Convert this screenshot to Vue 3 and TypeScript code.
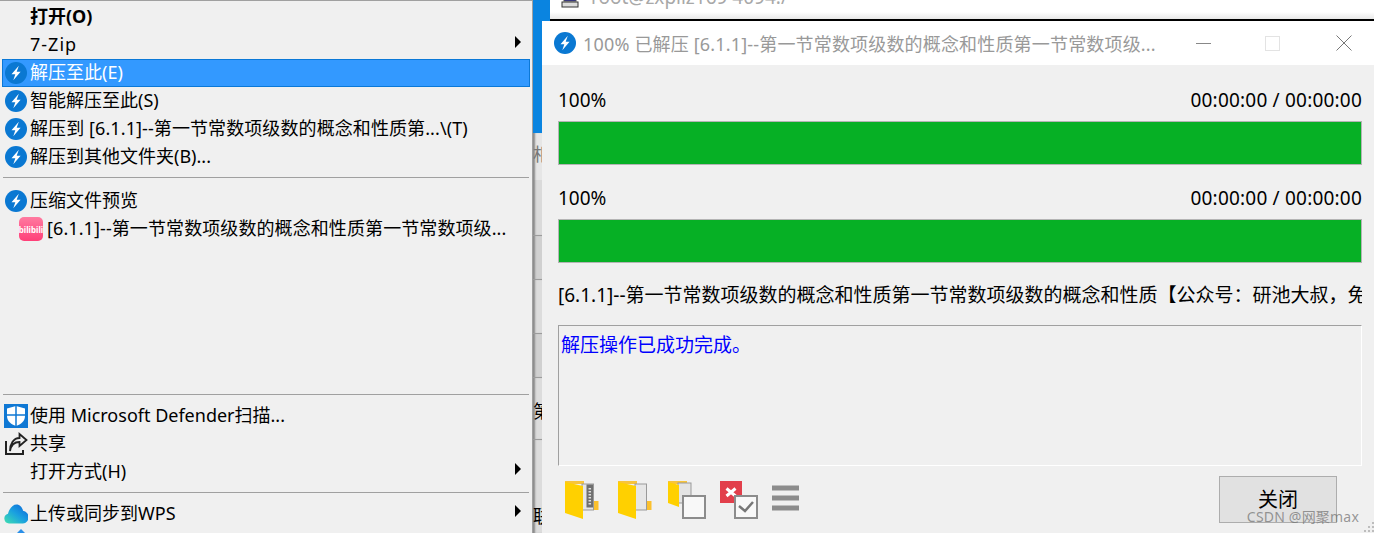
<template>
  <div class="screen">
    <aside class="menu">
      <template v-for="(group, g) in menuGroups" :key="g">
        <div v-if="g > 0" class="sep" :class="group.sepClass"></div>
        <div
          v-for="item in group.items"
          :key="item.label"
          class="row"
          :class="{ active: item.active, bold: item.bold, indent: item.icon === 'bili' }"
        >
          <span class="row-icon">
            <svg v-if="item.icon === 'bolt'" viewBox="0 0 22 22" width="22" height="22">
              <circle cx="11" cy="11" r="11" fill="#0a78d2" />
              <path d="M13.800 3.800 6.500 12.300h3.800L8.300 18.300 15.600 9.700h-3.900z" fill="#fff" />
            </svg>
            <svg v-else-if="item.icon === 'bili'" viewBox="0 0 24 24" width="24" height="24">
              <defs>
                <linearGradient id="biliFill" x1="0" x2="0" y1="0" y2="1">
                  <stop offset="0" stop-color="#ff7aa0" />
                  <stop offset="1" stop-color="#ff3f78" />
                </linearGradient>
              </defs>
              <rect width="24" height="24" rx="5" fill="url(#biliFill)" />
              <text x="12" y="15.500" text-anchor="middle" class="bili-text">bilibili</text>
            </svg>
            <svg v-else-if="item.icon === 'shield'" viewBox="0 0 24 24" width="24" height="24">
              <rect width="24" height="24" fill="#0f78d4" />
              <path d="M3 4.500 12 2l9 2.500V12c0 5-4 8.500-9 10-5-1.500-9-5-9-10z" fill="#fff" />
              <path d="M12 2v20M3 11h18" stroke="#0f78d4" stroke-width="1.500" />
            </svg>
            <svg v-else-if="item.icon === 'share'" viewBox="0 0 24 24" width="24" height="24">
              <path d="M2 9v13h17v-4" fill="none" stroke="#222" stroke-width="2" />
              <path d="M6 19c1-6 4.500-9 9.500-9v4l7-6-7-6v4C9.500 6 6 12 6 19z" fill="none" stroke="#222" stroke-width="1.800" />
            </svg>
            <svg v-else-if="item.icon === 'cloud'" viewBox="0 0 24 20" width="24" height="20">
              <defs>
                <linearGradient id="cloudFill" x1="0" x2="1" y1="1" y2="0">
                  <stop offset="0" stop-color="#3fe0b0" />
                  <stop offset="0.500" stop-color="#1aa0e0" />
                  <stop offset="1" stop-color="#0a5fd8" />
                </linearGradient>
              </defs>
              <path d="M5 19.500a5 5 0 0 1-1-9.800C5.500 4 9 .5 12.500.5c3.500 0 6 3 6.500 6.300a6.400 6.400 0 0 1 0 12.700z" fill="url(#cloudFill)" />
            </svg>
          </span>
          <span class="row-label" :style="item.track ? { letterSpacing: item.track + 'px' } : undefined">{{ item.label }}</span>
          <span v-if="item.sub" class="row-arrow"></span>
        </div>
        <div v-if="group.grow" class="menu-space"></div>
      </template>
      <svg class="peek-icon" viewBox="0 0 8 4" width="8" height="4">
        <path d="M0 4 4 0l4 4z" fill="#2a8fe8" />
      </svg>
    </aside>

    <div class="gutter">
      <div class="gutter-top"></div>
      <div v-for="(cell, i) in gutterCells" :key="i" class="cell" :class="cell.cls">
        <span v-if="cell.text">{{ cell.text }}</span>
      </div>
    </div>

    <div class="right">
      <div class="term">
        <svg viewBox="0 0 18 16" width="18" height="16">
          <rect x="3" y="-4" width="12" height="12" fill="#1a1aa8" stroke="#555" />
          <rect x="1" y="9" width="16" height="5" fill="#ddd" stroke="#333" />
        </svg>
        <span>root@zxpilz169 4094:/</span>
      </div>
      <div class="term-edge"></div>

      <section class="dialog">
        <header class="title-bar">
          <svg viewBox="0 0 22 22" width="22" height="22">
            <circle cx="11" cy="11" r="11" fill="#0a78d2" />
            <path d="M13.800 3.800 6.500 12.300h3.800L8.300 18.300 15.600 9.700h-3.900z" fill="#fff" />
          </svg>
          <span class="title-text">100% 已解压 [6.1.1]--第一节常数项级数的概念和性质第一节常数项级...</span>
          <span class="win-btns">
            <span class="win-min"></span>
            <span class="win-max"></span>
            <svg viewBox="0 0 16 16" width="16" height="16">
              <path d="M.5.5l15 15M15.500.5l-15 15" stroke="#777" fill="none" />
            </svg>
          </span>
        </header>

        <div class="body">
          <div v-for="n in 2" :key="n" class="progress">
            <div class="progress-info">
              <span>100%</span>
              <span class="time">00:00:00 / 00:00:00</span>
            </div>
            <div class="bar"><div class="bar-fill" :style="{ width: percent + '%' }"></div></div>
          </div>

          <div class="file-name">[6.1.1]--第一节常数项级数的概念和性质第一节常数项级数的概念和性质【公众号：研池大叔，免费分享</div>

          <div class="log">解压操作已成功完成。</div>

          <footer class="tools">
            <div class="tool-icons">
              <svg class="gap-5" viewBox="0 0 34 38" width="34" height="38">
                <path d="M0 0h19v3H0z" fill="#f8c43a" />
                <path d="M18 29V21h10v-1h5.500v9z" fill="#fbc02d" />
                <rect x="17" y="3" width="11.500" height="26" fill="#e6e6e6" stroke="#999" />
                <rect x="21.500" y="3.500" width="6.500" height="23" fill="#6f6f6f" />
                <path d="M24.800 7v17" stroke="#ddd" stroke-width="2.500" stroke-dasharray="1.500 1.500" />
                <path d="M0 1 18 5v33L0 32z" fill="#ffd000" />
              </svg>
              <svg class="gap-2" viewBox="0 0 34 38" width="34" height="38">
                <path d="M0 0h19v3H0z" fill="#f8c43a" />
                <path d="M18 29V21h10v-1h5.500v9z" fill="#fbc02d" />
                <rect x="17" y="3" width="11.500" height="26" fill="#e6e6e6" stroke="#999" />
                <path d="M0 1 18 5v33L0 32z" fill="#ffd000" />
              </svg>
              <svg viewBox="0 0 38 38" width="38" height="38">
                <path d="M0 0h19v3H0z" fill="#f8c43a" />
                <rect x="10" y="2" width="13" height="20" fill="#e4e4e4" stroke="#999" />
                <path d="M0 1 11 4v22L0 22z" fill="#ffd000" />
                <rect x="15" y="15" width="22" height="22" fill="#f8f8f8" stroke="#8c8c8c" stroke-width="2" />
              </svg>
              <svg viewBox="0 0 38 38" width="38" height="38">
                <rect width="22" height="22" fill="#e23f4b" />
                <path d="M6.500 7.500l9 7.500M15.500 7.500l-9 7.500" stroke="#fff" stroke-width="3" />
                <rect x="15" y="15" width="22" height="22" fill="#f8f8f8" stroke="#8c8c8c" stroke-width="2" />
                <path d="M19 25l6 5 8-9" fill="none" stroke="#777" stroke-width="2.500" />
              </svg>
              <svg class="burger" viewBox="0 0 27 26" width="27" height="26">
                <path d="M0 3h27M0 13h27M0 23h27" stroke="#8c8c8c" stroke-width="5" />
              </svg>
            </div>
            <button class="close-btn">关闭</button>
          </footer>
        </div>
      </section>
    </div>

    <div class="watermark">CSDN @网聚max</div>
    <svg class="grip" viewBox="0 0 10 11" width="10" height="11">
      <rect v-for="d in gripDots" :key="d[0] + '-' + d[1]" :x="d[0]" :y="d[1]" width="2" height="2" fill="#bdbdbd" />
    </svg>
  </div>
</template>

<script setup lang="ts">
type MenuItem = { label: string; icon?: string; active?: boolean; bold?: boolean; sub?: boolean; track?: number };
type MenuGroup = { items: MenuItem[]; grow?: boolean; sepClass?: string };

const percent = 100;

const menuGroups: MenuGroup[] = [
  {
    items: [
      { label: '打开(O)', bold: true },
      { label: '7-Zip', sub: true, track: 1 },
      { label: '解压至此(E)', icon: 'bolt', active: true },
      { label: '智能解压至此(S)', icon: 'bolt' },
      { label: '解压到 [6.1.1]--第一节常数项级数的概念和性质第...\\(T)', icon: 'bolt', track: 0.09 },
      { label: '解压到其他文件夹(B)...', icon: 'bolt' },
    ],
  },
  {
    sepClass: 'sep-wide',
    items: [
      { label: '压缩文件预览', icon: 'bolt' },
      { label: '[6.1.1]--第一节常数项级数的概念和性质第一节常数项级...', icon: 'bili', track: 0.09 },
    ],
    grow: true,
  },
  {
    items: [
      { label: '使用 Microsoft Defender扫描...', icon: 'shield' },
      { label: '共享', icon: 'share' },
      { label: '打开方式(H)', sub: true },
    ],
  },
  { items: [{ label: '上传或同步到WPS', icon: 'cloud', sub: true }] },
];

const gutterCells = [
  { cls: 'c1', text: '相' },
  { cls: 'c2' },
  { cls: 'c3' },
  { cls: 'c2' },
  { cls: 'c4', text: '第' },
  { cls: 'c5', text: '联' },
];

// triangular resize grip, bottom-right corner
const gripDots = [
  [8, 0],
  [4, 4], [8, 4],
  [0, 8], [4, 8], [8, 8],
];
</script>

<style>
html,
body {
  margin: 0;
  background: #f0f0f0;
  overflow: hidden;
}
</style>

<style scoped>
.screen {
  position: relative;
  display: flex;
  width: 1374px;
  height: 533px;
  overflow: hidden;
  font-family: "Noto Sans", "Noto Sans CJK SC", sans-serif;
  font-size: 18px;
  color: #000;
}

.menu {
  position: relative;
  flex: none;
  display: flex;
  flex-direction: column;
  box-sizing: border-box;
  width: 533px;
  height: 533px;
  padding: 2px 2px 5px 2px;
  background: #f0f0f0;
  border-top: 1px solid #a0a0a0;
  border-right: 1px solid #a0a0a0;
}

.row {
  flex: none;
  position: relative;
  display: flex;
  align-items: center;
  box-sizing: border-box;
  height: 28px;
  white-space: nowrap;
}

.row.active {
  background: #3399ff;
  border: 1px solid #0a78d7;
  color: #fff;
}

.row.bold {
  font-weight: 700;
}

.row-icon {
  flex: none;
  display: flex;
  align-items: center;
  justify-content: center;
  width: 28px;
  height: 24px;
}

.row.active .row-icon {
  margin-left: -1px;
}

.row.indent .row-icon {
  width: 24px;
  margin-left: 17px;
  margin-right: 4px;
}

.bili-text {
  fill: #fff;
  font-family: "Noto Sans", sans-serif;
  font-size: 8px;
  font-weight: 700;
}

.row-label {
  margin-bottom: 2px;
  line-height: 26px;
}

.row-arrow {
  position: absolute;
  right: 9px;
  top: 5px;
  border-left: 6px solid #000;
  border-top: 6px solid transparent;
  border-bottom: 6px solid transparent;
}

.sep {
  flex: none;
  height: 1px;
  margin: 6px 1px 7px;
  background: #a0a0a0;
}

.sep-wide {
  margin-bottom: 9px;
}

.menu-space {
  flex: 1;
}

.peek-icon {
  position: absolute;
  left: 17px;
  bottom: 0;
}

.gutter {
  flex: none;
  display: flex;
  flex-direction: column;
  width: 9px;
  height: 533px;
  background: #dcdcdc;
  font-family: "Noto Sans CJK SC", sans-serif;
  font-size: 18px;
  line-height: 20px;
  overflow: hidden;
}

.gutter-top {
  height: 133px;
  flex: none;
  background: #0a84e0;
}

.cell {
  flex: none;
  box-sizing: border-box;
  overflow: hidden;
  border-bottom: 1px solid #9c9c9c;
  box-shadow: inset 3px 0 2px -1px #8a8a8a;
  white-space: nowrap;
}

.cell span {
  display: block;
}

.c1 { height: 103px; background: linear-gradient(#e6e6e6 0 47px, #dadada 47px); padding-top: 10px; color: #777; }
.c2 { height: 44px; background: #d0d0d0; }
.c3 { height: 54px; background: #dcdcdc; }
.c4 { height: 62px; padding-top: 22px; background: #dcdcdc; }
.c5 { height: 93px; padding-top: 65px; background: #dcdcdc; border-bottom: 0; }

.right {
  flex: 1;
  min-width: 0;
  display: flex;
  flex-direction: column;
  height: 533px;
  background: linear-gradient(#0a84e0 0 21px, transparent 21px);
}

.term {
  flex: none;
  display: flex;
  align-items: flex-end;
  gap: 12px;
  height: 19px;
  margin-left: 8px;
  padding-left: 11px;
  overflow: hidden;
  background: linear-gradient(#fff 0 12px, #e8e8e8);
  color: #a8a8a8;
  font-size: 19px;
  line-height: 20px;
}

.term svg {
  flex: none;
  margin-bottom: 10px;
}

.term span {
  margin-bottom: 12px;
}

.term-edge {
  flex: none;
  height: 2px;
  margin-left: 8px;
  background: #000;
}

.dialog {
  flex: 1;
  min-height: 0;
  display: flex;
  flex-direction: column;
}

.title-bar {
  flex: none;
  display: flex;
  align-items: center;
  box-sizing: border-box;
  height: 44px;
  padding-left: 12px;
  background: #fff;
  color: #999;
  white-space: nowrap;
}

.title-text {
  margin-left: 7px;
  letter-spacing: 0.17px;
}

.win-btns {
  margin-left: auto;
  display: flex;
  align-items: center;
  padding-right: 22px;
}

.win-min {
  width: 15px;
  height: 1px;
  background: #888;
}

.win-max {
  box-sizing: border-box;
  width: 15px;
  height: 15px;
  margin: 0 56px 0 54px;
  border: 1px solid #e3e3e3;
}

.body {
  flex: 1;
  min-height: 0;
  display: flex;
  flex-direction: column;
  padding: 21px 12px 0 16px;
  background: #f0f0f0;
  font-size: 19px;
}

.progress {
  flex: none;
  height: 98px;
}

.progress-info {
  display: flex;
  justify-content: space-between;
  height: 28px;
  line-height: 28px;
}

.time {
  letter-spacing: 0.2px;
}

.bar {
  box-sizing: border-box;
  height: 44px;
  margin-top: 7px;
  border: 1px solid #b4b4b4;
  background: #e6e6e6;
}

.bar-fill {
  height: 100%;
  background: #06b025;
}

.file-name {
  flex: none;
  height: 28px;
  margin-top: -1px;
  line-height: 28px;
  white-space: nowrap;
  overflow: hidden;
}

.log {
  flex: none;
  box-sizing: border-box;
  height: 141px;
  margin-top: 16px;
  padding: 5px 2px;
  border: 1px solid;
  border-color: #a0a0a0 #fff #fff #a0a0a0;
  color: #0000ff;
  line-height: 28px;
}

.tools {
  flex: 1;
  min-height: 0;
  display: flex;
  align-items: flex-start;
  justify-content: space-between;
  padding: 10px 25px 0 7px;
}

.tool-icons {
  display: flex;
  align-items: center;
  gap: 14px;
  padding-top: 5px;
}

.gap-5 {
  margin-right: 5px;
}

.gap-2 {
  margin-right: 2px;
}

.burger {
  margin-bottom: 4px;
}

.close-btn {
  flex: none;
  box-sizing: border-box;
  width: 118px;
  height: 47px;
  padding: 0;
  border: 1px solid #adadad;
  background: #e1e1e1;
  color: #000;
  font: inherit;
  font-size: 20px;
  line-height: 46px;
}

.watermark {
  position: absolute;
  right: 15px;
  bottom: 6px;
  color: rgba(110, 110, 110, 0.7);
  font-size: 14px;
  letter-spacing: 0.2px;
  line-height: 20px;
  white-space: nowrap;
}

.grip {
  position: absolute;
  right: 0;
  bottom: 0;
}
</style>
